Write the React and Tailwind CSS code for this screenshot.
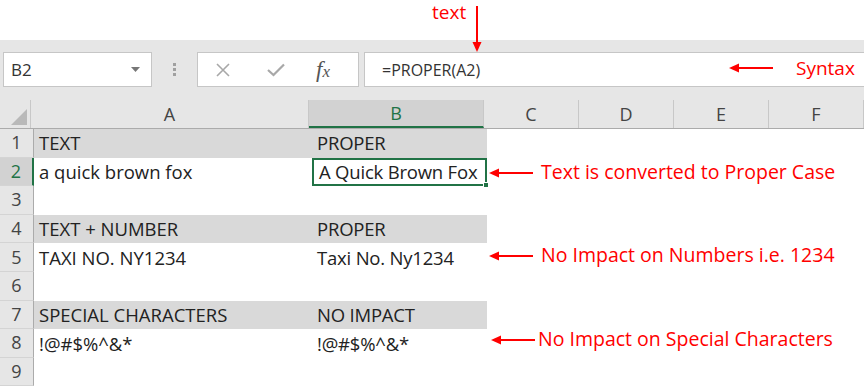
import React from "react";

const cols = [
  { key: "A", w: "w-[278px]" },
  { key: "B", w: "w-[175px]" },
  { key: "C", w: "w-[95px]" },
  { key: "D", w: "w-[95px]" },
  { key: "E", w: "w-[95px]" },
  { key: "F", w: "w-[95px]" },
];

const rows = [
  { n: 1, a: "TEXT", b: "PROPER", head: true },
  { n: 2, a: "a quick brown fox", b: "A Quick Brown Fox", sel: true },
  { n: 3 },
  { n: 4, a: "TEXT + NUMBER", b: "PROPER", head: true },
  { n: 5, a: "TAXI NO. NY1234", b: "Taxi No. Ny1234" },
  { n: 6 },
  { n: 7, a: "SPECIAL CHARACTERS", b: "NO IMPACT", head: true },
  { n: 8, a: "!@#$%^&*", b: "!@#$%^&*" },
  { n: 9 },
];

const LeftArrow = ({ className }) => (
  <svg className={className} width="44" height="10" viewBox="0 0 44 10">
    <line x1="8" y1="5" x2="44" y2="5" stroke="#ff0000" strokeWidth="2" />
    <polygon points="0,5 10,0.5 10,9.5" fill="#ff0000" />
  </svg>
);

const App = () => {
  return (
    <div className="relative w-[864px] h-[388px] overflow-hidden bg-white font-['Open_Sans',sans-serif] text-[#222]">
      {/* top white strip */}
      <div className="h-[40px]"></div>

      {/* formula bar */}
      <div className="h-[60px] bg-[#e6e6e6] flex items-start pt-[12px] pl-[3px]">
        <div className="w-[149px] h-[35px] bg-white border border-[#c6c6c6] flex items-center justify-between pl-[7px] pr-[11px]">
          <span className="text-[17px] text-[#333]">B2</span>
          <svg width="9" height="5" viewBox="0 0 9 5">
            <polygon points="0,0 9,0 4.5,5" fill="#777" />
          </svg>
        </div>
        <div className="w-[45px] h-[35px] flex flex-col items-center justify-center gap-[2px]">
          <span className="w-[3px] h-[3px] bg-[#a0a0a0]"></span>
          <span className="w-[3px] h-[3px] bg-[#a0a0a0]"></span>
          <span className="w-[3px] h-[3px] bg-[#a0a0a0]"></span>
        </div>
        <div className="w-[162px] h-[35px] bg-white border border-[#c6c6c6] flex items-center pl-[17px]">
          <svg width="16" height="16" viewBox="0 0 16 16">
            <path d="M2 2 L14 14 M14 2 L2 14" stroke="#a8a8a8" strokeWidth="1.6" />
          </svg>
          <svg className="ml-[36px]" width="18" height="14" viewBox="0 0 18 14">
            <path d="M1 7 L6.5 12 L17 1.5" stroke="#a8a8a8" strokeWidth="2.2" fill="none" />
          </svg>
          <span className="ml-[31px] font-['Liberation_Serif',serif] italic text-[23px] text-[#555] leading-none">
            f<span className="text-[17px]">x</span>
          </span>
        </div>
        <div className="ml-[5px] flex-1 h-[35px] bg-white border border-[#c6c6c6] border-r-0 flex items-center pl-[17px]">
          <span className="text-[16px] text-[#333]">=PROPER(A2)</span>
        </div>
      </div>

      {/* column headers */}
      <div className="flex h-[29px] bg-[#e6e6e6] border-b border-[#ababab]">
        <div className="w-[34px] h-full border-r border-[#c8c8c8] relative">
          <svg className="absolute right-[3px] bottom-[3px]" width="16" height="16" viewBox="0 0 16 16">
            <polygon points="16,0 16,16 0,16" fill="#b9b9b9" />
          </svg>
        </div>
        {cols.map((c) => (
          <div
            key={c.key}
            className={`${c.w} shrink-0 h-full flex items-center justify-center text-[18px] border-r ${
              c.key === "B"
                ? "bg-[#d2d2d2] text-[#217346] border-b-2 border-b-[#217346] border-r-[#c8c8c8]"
                : "text-[#444] border-[#c8c8c8]"
            }`}
          >
            {c.key}
          </div>
        ))}
      </div>

      {/* rows */}
      {rows.map((r) => (
        <div key={r.n} className="flex h-[28.6px]">
          <div
            className={`w-[34px] shrink-0 h-full flex items-center justify-center text-[18px] border-b border-[#d4d4d4] ${
              r.sel
                ? "bg-[#d2d2d2] text-[#217346] border-r-2 border-r-[#217346]"
                : "bg-[#e6e6e6] text-[#444] border-r border-r-[#ababab]"
            }`}
          >
            {r.n}
          </div>
          <div
            className={`w-[278px] shrink-0 h-full flex items-center pl-[5px] text-[18.5px] ${
              r.head ? "bg-[#d9d9d9]" : ""
            }`}
          >
            {r.a}
          </div>
          <div
            className={`relative w-[175px] shrink-0 h-full flex items-center pl-[5px] text-[18.5px] tracking-[-0.2px] whitespace-nowrap ${
              r.head ? "bg-[#d9d9d9]" : ""
            } ${r.sel ? "border-2 border-[#217346] pl-[3px]" : ""}`}
          >
            {r.b}
            {r.sel && (
              <span className="absolute right-[-4px] bottom-[-4px] w-[6px] h-[6px] bg-[#217346] border border-white"></span>
            )}
          </div>
        </div>
      ))}

      {/* annotations */}
      <div className="absolute left-[432px] top-[1px] text-[19px] text-[#ff0000] leading-[22px]">text</div>
      <svg className="absolute left-[471px] top-[6px]" width="12" height="46" viewBox="0 0 12 46">
        <line x1="6" y1="0" x2="6" y2="38" stroke="#ff0000" strokeWidth="2" />
        <polygon points="6,46 1.5,36 10.5,36" fill="#ff0000" />
      </svg>

      <LeftArrow className="absolute left-[719px] top-[63px] w-[64px]" />
      <div className="absolute left-[796px] top-[56px] text-[19px] text-[#ff0000] leading-[24px]">Syntax</div>

      <LeftArrow className="absolute left-[489px] top-[168px]" />
      <div className="absolute left-[541px] top-[160px] text-[19.5px] text-[#ff0000] leading-[24px]">
        Text is converted to Proper Case
      </div>

      <LeftArrow className="absolute left-[489px] top-[251px]" />
      <div className="absolute left-[541px] top-[243px] text-[19.5px] text-[#ff0000] leading-[24px]">
        No Impact on Numbers i.e. 1234
      </div>

      <LeftArrow className="absolute left-[491px] top-[335px]" />
      <div className="absolute left-[538px] top-[327px] text-[19.5px] text-[#ff0000] leading-[24px]">
        No Impact on Special Characters
      </div>
    </div>
  );
};

export default App;
